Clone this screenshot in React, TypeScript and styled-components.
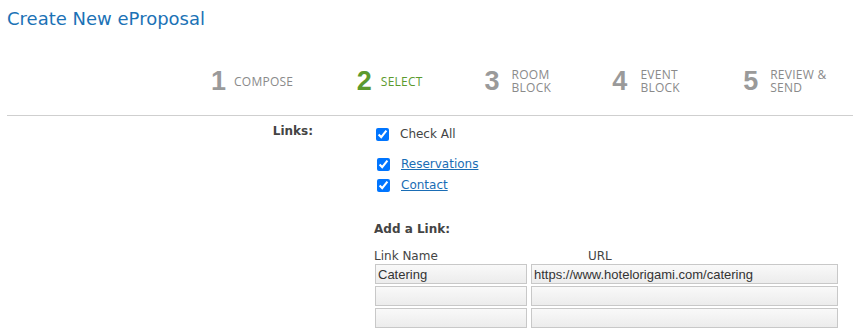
import React from "react";
import styled, { createGlobalStyle } from "styled-components";

const Global = createGlobalStyle`
  html, body { margin: 0; padding: 0; background: #fff; }
  body { font-family: "DejaVu Sans", Verdana, sans-serif; }
`;

const Page = styled.div`
  width: 853px;
  height: 336px;
  overflow: hidden;
  padding: 8px 0 0 7px;
  box-sizing: border-box;
`;

const Title = styled.h1`
  margin: 0;
  font-family: "DejaVu Sans", Verdana, sans-serif;
  font-weight: normal;
  font-size: 18px;
  line-height: 22px;
  color: #1b72b6;
`;

const Steps = styled.div`
  display: flex;
  align-items: center;
  height: 50px;
  margin-top: 26px;
  padding-left: 204px;
`;

const Step = styled.div<{ $w: number; $gap: number }>`
  display: flex;
  align-items: center;
  width: ${(p) => p.$w}px;
  gap: ${(p) => p.$gap}px;
`;

const StepNum = styled.span<{ $active?: boolean }>`
  font-family: "Liberation Sans", Arial, sans-serif;
  font-weight: bold;
  font-size: 27px;
  line-height: 30px;
  color: ${(p) => (p.$active ? "#5b9a2e" : "#9a9a9a")};
`;

const StepLabel = styled.span<{ $active?: boolean }>`
  display: flex;
  flex-direction: column;
  font-family: "Open Sans", sans-serif;
  font-size: 12px;
  letter-spacing: 0.25px;
  line-height: 13px;
  text-transform: uppercase;
  color: ${(p) => (p.$active ? "#5b9a2e" : "#8a8a8a")};
`;

const Divider = styled.hr`
  margin: 9px 0 0 0;
  border: none;
  border-top: 1px solid #cfcfcf;
  height: 0;
`;

const Form = styled.div`
  display: grid;
  grid-template-columns: 306px 1fr;
  column-gap: 61px;
`;

const FieldLabel = styled.div`
  text-align: right;
  font-weight: bold;
  font-size: 12px;
  line-height: 14px;
  color: #444;
  padding-top: 8px;
`;

const Content = styled.div`
  padding-top: 11px;
  font-size: 12px;
  line-height: 14px;
  color: #444;
`;

const CheckRow = styled.label<{ $indent?: number }>`
  display: flex;
  align-items: center;
  height: 14px;
  padding-left: ${(p) => p.$indent ?? 2}px;
  gap: 11px;
`;

const CheckList = styled.div`
  display: flex;
  flex-direction: column;
  gap: 7px;
  margin-top: 16px;
`;

const Box = styled.input.attrs({ type: "checkbox" })`
  margin: 0;
  width: 13px;
  height: 13px;
  accent-color: #0075ff;
`;

const LinkText = styled.a`
  color: #1a6db5;
  text-decoration: underline;
`;

const SubHead = styled.div`
  font-weight: bold;
  margin-top: 30px;
`;

const TableHead = styled.div`
  display: grid;
  grid-template-columns: 157px 1fr;
  margin-top: 13px;
  margin-bottom: 1px;
`;

const UrlHead = styled.span`
  padding-left: 57px;
`;

const Inputs = styled.div`
  display: grid;
  grid-template-columns: 152px 307px;
  column-gap: 4px;
  row-gap: 2px;
  padding-left: 1px;
`;

const TextInput = styled.input`
  box-sizing: border-box;
  height: 20px;
  margin: 0;
  padding: 0 2px;
  border: 1px solid #c8c8c8;
  background: linear-gradient(to bottom, #f9f9f9, #ececec);
  font-family: "Liberation Sans", Arial, sans-serif;
  font-size: 13px;
  color: #333;
  outline: none;
`;

const steps = [
  { n: 1, label: ["Compose"], w: 146, gap: 8 },
  { n: 2, label: ["Select"], w: 128, gap: 9, active: true },
  { n: 3, label: ["Room", "Block"], w: 128, gap: 12 },
  { n: 4, label: ["Event", "Block"], w: 131, gap: 13 },
  { n: 5, label: ["Review &", "Send"], w: 110, gap: 12 },
];

const rows = [
  { name: "Catering", url: "https://www.hotelorigami.com/catering" },
  { name: "", url: "" },
  { name: "", url: "" },
];

export default function App() {
  return (
    <>
      <Global />
      <Page>
        <Title>Create New eProposal</Title>
        <Steps>
          {steps.map((s) => (
            <Step key={s.n} $w={s.w} $gap={s.gap}>
              <StepNum $active={s.active}>{s.n}</StepNum>
              <StepLabel $active={s.active}>
                {s.label.map((l, i) => (
                  <span key={i}>{l}</span>
                ))}
              </StepLabel>
            </Step>
          ))}
        </Steps>
        <Divider />
        <Form>
          <FieldLabel>Links:</FieldLabel>
          <Content>
            <CheckRow>
              <Box defaultChecked />
              <span>Check All</span>
            </CheckRow>
            <CheckList>
              <CheckRow $indent={3}>
                <Box defaultChecked />
                <LinkText href="#">Reservations</LinkText>
              </CheckRow>
              <CheckRow $indent={3}>
                <Box defaultChecked />
                <LinkText href="#">Contact</LinkText>
              </CheckRow>
            </CheckList>
            <SubHead>Add a Link:</SubHead>
            <TableHead>
              <span>Link Name</span>
              <UrlHead>URL</UrlHead>
            </TableHead>
            <Inputs>
              {rows.map((r, i) => (
                <React.Fragment key={i}>
                  <TextInput defaultValue={r.name} />
                  <TextInput defaultValue={r.url} />
                </React.Fragment>
              ))}
            </Inputs>
          </Content>
        </Form>
      </Page>
    </>
  );
}
